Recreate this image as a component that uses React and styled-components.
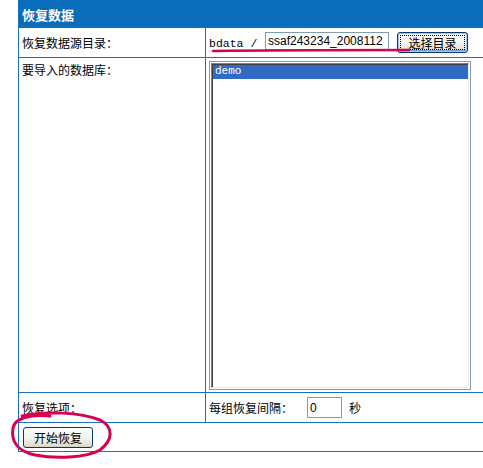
import styled, { createGlobalStyle } from 'styled-components'

const GlobalStyle = createGlobalStyle`
  html, body {
    margin: 0;
    padding: 0;
    background: #fff;
    overflow: hidden;
  }
  body {
    font-family: "Noto Sans CJK SC", "Liberation Sans", sans-serif;
    font-size: 12px;
    color: #000;
  }
`;

const Page = styled.div`
  position: relative;
  width: 483px;
  height: 468px;
  padding-left: 18px;
  box-sizing: border-box;
`;

const Panel = styled.div`
  width: 480px;
  display: grid;
  grid-template-columns: 186px 1fr;
  grid-template-rows: 27px 29px 334px 29px 28px;
  gap: 1px;
  background: #1a70bd;
  border: 1px solid #1a70bd;
  border-top: none;
`;

const Header = styled.div`
  grid-column: 1 / 3;
  background: #0a6dbb;
  color: #fff;
  font-weight: bold;
  font-size: 13px;
  display: flex;
  align-items: center;
  padding-left: 3px;
  padding-top: 1px;
`;

const Cell = styled.div`
  background: #fff;
  display: flex;
  align-items: ${p => (p.$top ? 'flex-start' : 'center')};
  padding: ${p => (p.$top ? '3px 3px 0' : '0 3px')};
  grid-column: ${p => (p.$span ? '1 / 3' : 'auto')};
  white-space: nowrap;
  overflow: hidden;
`;

const Label = styled.span`
  line-height: 14px;
  margin-top: ${p => p.$offset || 0}px;
`;

const PathRow = styled.div`
  display: flex;
  align-items: flex-start;
  padding-top: 1px;
`;

const Prefix = styled.span`
  font-family: "Liberation Mono", "DejaVu Sans Mono", monospace;
  font-size: 11.5px;
  margin-top: 5px;
  width: 56px;
`;

const TextInput = styled.input`
  box-sizing: border-box;
  width: ${p => p.$w}px;
  height: ${p => p.$h}px;
  border: 1px solid #7f9db9;
  padding: 0 2px;
  font-family: "Liberation Sans", Arial, sans-serif;
  font-size: 12px;
  color: #000;
  background: #fff;
  outline: none;
  margin: 0 0 0 ${p => p.$ml || 0}px;
`;

const XpButton = styled.button`
  box-sizing: border-box;
  height: 21px;
  width: ${p => p.$w}px;
  margin: ${p => p.$m || 0};
  padding: 0;
  border: 1px solid #003c74;
  border-radius: 3px;
  background: linear-gradient(#ffffff 0%, #f4f3ee 50%, #dcd8cc 100%);
  box-shadow: ${p => (p.$focus ? 'inset 0 0 0 1px #a6c4ec, inset 0 -1px 0 1px #7da2ce' : 'inset 0 -1px 0 #d6d0c5')};
  font-family: "Noto Sans CJK SC", sans-serif;
  font-size: 12px;
  line-height: 17px;
  color: #000;
  outline: ${p => (p.$focus ? '1px dotted #000' : 'none')};
  outline-offset: -4px;
`;

const ListBox = styled.div`
  box-sizing: border-box;
  width: 262px;
  height: 329px;
  border: 1px solid #7f9db9;
  padding: 1px;
  background: #fff;
`;

const ListInner = styled.div`
  height: 100%;
  box-sizing: border-box;
  border-style: solid;
  border-width: 1px;
  border-color: #808080 #ece9d8 #ece9d8 #808080;
  box-shadow: inset 1px 1px 0 #404040;
  padding: 0 0 0 1px;
`;

const ListItem = styled.div`
  height: 14px;
  margin-top: 1px;
  padding-left: 2px;
  background: ${p => (p.$selected ? '#316ac5' : 'transparent')};
  color: ${p => (p.$selected ? '#fff' : '#000')};
  font-family: "Liberation Mono", "DejaVu Sans Mono", monospace;
  font-size: 11px;
  line-height: 13px;
`;

const IntervalRow = styled.div`
  display: flex;
  align-items: center;
`;

const Unit = styled.span`
  margin-left: 7px;
`;

const Annotations = styled.svg`
  position: absolute;
  left: 0;
  top: 0;
  pointer-events: none;
`;

export default function App() {
  return (
    <Page>
      <GlobalStyle />
      <Panel>
        <Header>恢复数据</Header>

        <Cell>
          <Label>恢复数据源目录：</Label>
        </Cell>
        <Cell $top>
          <PathRow>
            <Prefix>bdata /</Prefix>
            <TextInput $w={124} $h={18} defaultValue="ssaf243234_2008112" />
            <XpButton $w={71} $m="0 0 0 8px" $focus>选择目录</XpButton>
          </PathRow>
        </Cell>

        <Cell $top>
          <Label $offset={2}>要导入的数据库：</Label>
        </Cell>
        <Cell $top>
          <ListBox>
            <ListInner>
              <ListItem $selected>demo</ListItem>
            </ListInner>
          </ListBox>
        </Cell>

        <Cell>
          <Label>恢复选项：</Label>
        </Cell>
        <Cell>
          <IntervalRow>
            <Label>每组恢复间隔：</Label>
            <TextInput $w={35} $h={21} $ml={14} defaultValue="0" />
            <Unit>秒</Unit>
          </IntervalRow>
        </Cell>

        <Cell $span $top>
          <XpButton $w={70} $m="1px 0 0 1px">开始恢复</XpButton>
        </Cell>
      </Panel>

      <Annotations width="483" height="468" viewBox="0 0 483 468">
        <path
          d="M213 51 C 280 50, 350 50, 409 50"
          fill="none"
          stroke="#d8004f"
          strokeWidth="2.5"
          strokeLinecap="round"
        />
        <path
          d="M22 416 C 45 411, 80 412, 100 420 C 114 427, 113 440, 100 450 C 86 458, 55 459, 35 455 C 16 451, 11 440, 13 428 C 15 418, 30 414, 50 416"
          fill="none"
          stroke="#d8004f"
          strokeWidth="3"
          strokeLinecap="round"
        />
      </Annotations>
    </Page>
  );
}
